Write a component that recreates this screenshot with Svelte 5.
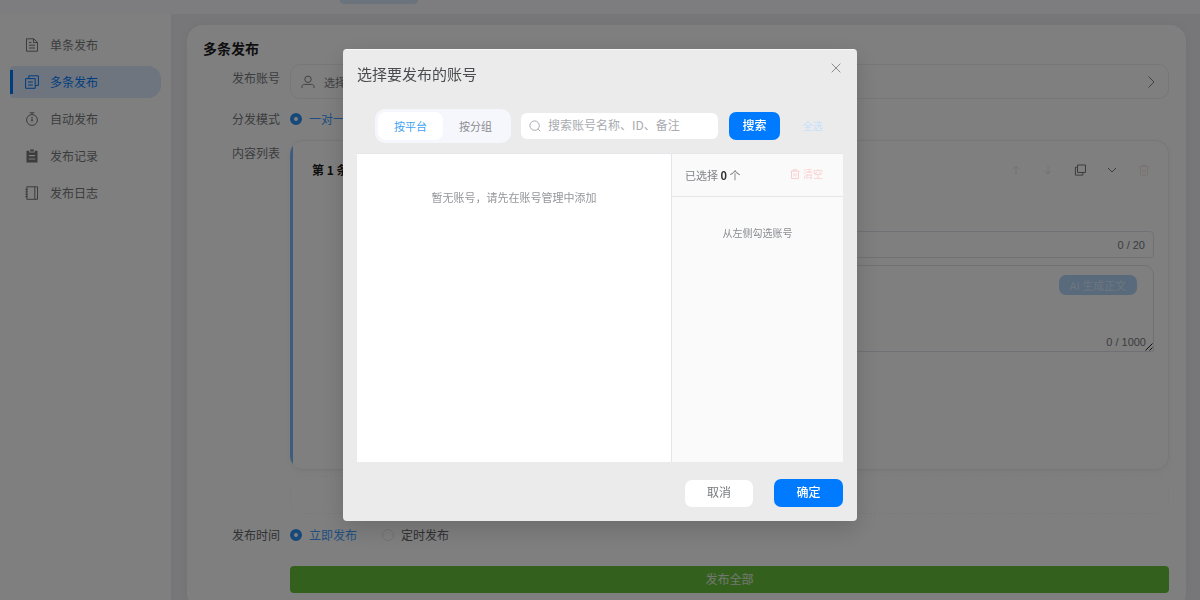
<script>
  const menu = [
    { label: '单条发布', icon: 'doc' },
    { label: '多条发布', icon: 'copy', active: true },
    { label: '自动发布', icon: 'timer' },
    { label: '发布记录', icon: 'clip' },
    { label: '发布日志', icon: 'book' },
  ];
  let when = $state('now');
  let mode = $state('one');
  let tab = $state('platform');
  let keyword = $state('');
  let title = $state('');
  let body = $state('');
</script>

<div class="app">
  <header class="topbar"><span class="pill"></span></header>
  <div class="shell">
    <nav class="side">
      {#each menu as m}
        <a href="#{m.icon}" class:active={m.active}>
          <svg class="ico" viewBox="0 0 14 14">
            {#if m.icon === 'doc'}
              <path d="M1.5 .8h7.2l3.8 3.6v8.8h-11zM8.5 .8v3.8h4M4 4.5h2.4M4 7.2h6M4 10h6" />
            {:else if m.icon === 'copy'}
              <path d="M.6 3.6h9.6v9.7H.6zM3.8 3.4V.8h9.6v9.6h-3M3 7h4.8M3 10h4.8" />
            {:else if m.icon === 'timer'}
              <circle cx="7" cy="8" r="5.4" /><path d="M4.7 .8h4.6M7 .8v1.8M7 4.8v3.4" /><circle cx="7" cy="8.6" r=".6" />
            {:else if m.icon === 'clip'}
              <path class="solid" fill-rule="evenodd" d="M1.5 1.8h2.8v1.6h5.4V1.8h2.8v11.8h-11zM3.8 6v1.2h6.4V6zM3.8 9.4v1.2h6.4V9.4zM5.2 .5h3.6v2H5.2z" />
            {:else}
              <path d="M1.8 .8h10.7v12.5H1.8zM9.8 .8v12.5M.4 3.4h2.4M.4 5.8h2.4M.4 8.2h2.4M.4 10.6h2.4" />
            {/if}
          </svg>
          {m.label}
        </a>
      {/each}
    </nav>

    <main>
      <section class="card">
        <h1>多条发布</h1>
        <div class="form">
          <span class="lab first">发布账号</span>
          <button class="picker">
            <svg class="user" viewBox="0 0 14 14"><circle cx="7" cy="4.3" r="3.2" /><path d="M1 13.2v-1.4c0-1.6 1-2.4 2.6-2.4h6.8c1.6 0 2.6.8 2.6 2.4v1.4" /></svg>
            <span>选择</span>
            <svg class="chev" viewBox="0 0 14 14"><path d="M4.5 1.5 10 7l-5.5 5.5" /></svg>
          </button>

          <span class="lab">分发模式</span>
          <div class="radios mode">
            <label class:on={mode === 'one'}><input type="radio" name="mode" value="one" bind:group={mode} />一对一</label>
          </div>

          <span class="lab list">内容列表</span>
          <div class="item">
            <div class="itemhead">
              <strong>第 1 条</strong>
              <button disabled aria-label="上移"><svg viewBox="0 0 14 14"><path d="M7 12V3M4 6l3-3 3 3" /></svg></button>
              <button disabled aria-label="下移"><svg viewBox="0 0 14 14"><path d="M7 3v8M4 8l3 3 3-3" /></svg></button>
              <button aria-label="复制"><svg viewBox="0 0 14 14"><path d="M4.5 2h8v7.500h-8zM4.500 4.200H2.400v7.900h7.500V9.600" /></svg></button>
              <button aria-label="收起"><svg viewBox="0 0 14 14"><path d="m3 5 4 4 4-4" /></svg></button>
              <button class="del" disabled aria-label="删除"><svg viewBox="0 0 14 14"><path d="M2 3.500h10M5 3.500V2h4v1.500M3.500 3.500V12h7V3.500M5.800 6v4M8.200 6v4" /></svg></button>
            </div>
            <div class="field one">
              <input type="text" aria-label="标题" bind:value={title} />
              <span class="count">{title.length} / 20</span>
            </div>
            <div class="field many">
              <textarea aria-label="正文" bind:value={body}></textarea>
              <button class="ai" disabled>AI 生成正文</button>
              <span class="count low">{body.length} / 1000</span>
              <svg class="grip" viewBox="0 0 8 8"><path d="M.5 7.500 7.500.5M4.500 7.500l3-3" /></svg>
            </div>
          </div>

          <div class="add"></div>

          <span class="lab time">发布时间</span>
          <div class="radios">
            <label class:on={when === 'now'}><input type="radio" name="when" value="now" bind:group={when} />立即发布</label>
            <label class:on={when === 'later'}><input type="radio" name="when" value="later" bind:group={when} />定时发布</label>
          </div>

          <button class="submit">发布全部</button>
        </div>
      </section>
    </main>
  </div>
</div>

<div class="mask">
  <div class="dialog" role="dialog" aria-modal="true" aria-labelledby="dlg-title">
    <div class="dhead">
      <h2 id="dlg-title">选择要发布的账号</h2>
      <button class="close" aria-label="关闭"><svg viewBox="0 0 10 10"><path d="m.7.7 8.600 8.600M9.300.7.7 9.300" /></svg></button>
    </div>
    <div class="tools">
      <div class="tabs">
        <button class:sel={tab === 'platform'} onclick={() => (tab = 'platform')}>按平台</button>
        <button class:sel={tab === 'group'} onclick={() => (tab = 'group')}>按分组</button>
      </div>
      <div class="search">
        <svg viewBox="0 0 12 12"><circle cx="5.600" cy="5.600" r="4.700" /><path d="m9 9 2.300 2.300" /></svg>
        <input type="text" aria-label="搜索账号" placeholder="搜索账号名称、ID、备注" bind:value={keyword} />
      </div>
      <button class="primary find">搜索</button>
      <button class="all" disabled>全选</button>
    </div>
    <div class="panes">
      <div class="left">暂无账号，请先在账号管理中添加</div>
      <div class="right">
        <div class="rhead">
          <span>已选择 <b>0</b> 个</span>
          <button class="clear" disabled>
            <svg viewBox="0 0 10 10"><path d="M.5 2.200h9M3.300 2.200V.7h3.400v1.500M1.500 2.200v7.300h7V2.200M3.900 4.300v3.200M6.100 4.300v3.200" /></svg>清空
          </button>
        </div>
        <p>从左侧勾选账号</p>
      </div>
    </div>
    <div class="foot">
      <button class="cancel">取消</button>
      <button class="primary ok">确定</button>
    </div>
  </div>
</div>

<style>
  :global(body) {
    margin: 0;
    overflow: hidden;
    background: #eeeef3;
  }
  .app,
  .mask {
    font: 12px/18px 'Noto Sans CJK SC', sans-serif;
    color: #77797d;
  }
  .app *,
  .mask * {
    box-sizing: border-box;
  }
  button,
  input,
  textarea {
    font: inherit;
    color: inherit;
    border: 0;
    padding: 0;
    margin: 0;
    background: none;
  }
  svg {
    fill: none;
    stroke: currentColor;
    display: block;
    flex: none;
  }
  .app {
    height: 100vh;
    display: flex;
    flex-direction: column;
    overflow: hidden;
  }
  .topbar {
    flex: none;
    height: 14px;
    background: #fafaff;
    padding-left: 340px;
  }
  .pill {
    display: block;
    width: 78px;
    height: 4px;
    border-radius: 0 0 12px 12px;
    background: #d6e6fa;
  }
  .shell {
    flex: 1;
    display: flex;
    min-height: 0;
  }
  .side {
    flex: none;
    width: 171px;
    padding: 15px 10px;
    background: #fff;
    display: flex;
    flex-direction: column;
    gap: 5px;
  }
  .side a {
    display: flex;
    align-items: center;
    gap: 11px;
    height: 32px;
    flex: none;
    padding-left: 15px;
    border-radius: 4px 13px 13px 4px;
    color: #77797d;
    text-decoration: none;
  }
  .side a.active {
    color: #007aff;
    background:
      linear-gradient(#007aff, #007aff) left center / 3px 24px no-repeat,
      #dceafc;
  }
  .ico {
    width: 14px;
    height: 14px;
  }
  .solid {
    fill: currentColor;
    stroke: none;
  }
  main {
    flex: 1;
    min-width: 0;
    padding: 11px 14px 0 16px;
  }
  .card {
    background: #fff;
    border-radius: 16px;
    min-height: 100%;
    padding: 15px 17px 16px 16px;
    box-shadow: 0 0 10px rgba(0, 0, 0, 0.04);
  }
  h1 {
    margin: 0 0 7px;
    font-size: 14px;
    line-height: 17px;
    color: #1d1d1f;
  }
  .form {
    display: grid;
    grid-template-columns: 77px 1fr;
    column-gap: 10px;
    align-items: start;
  }
  .lab {
    text-align: right;
    padding-top: 11px;
    white-space: nowrap;
  }
  .lab.first {
    padding-top: 5px;
  }
  .lab.list {
    padding-top: 4px;
  }
  .lab.time {
    padding-top: 12px;
    color: #606266;
  }
  .picker {
    height: 35px;
    display: flex;
    align-items: center;
    gap: 9px;
    padding: 0 10px 0 10px;
    border: 1px solid #eceff2;
    border-radius: 10px;
    font-size: 11px;
    color: #808388;
  }
  .picker span {
    flex: 1;
    text-align: left;
  }
  .user,
  .chev {
    width: 14px;
    height: 14px;
  }
  .radios {
    display: flex;
    gap: 25px;
    padding-top: 12px;
    color: #606266;
  }
  .mode {
    padding-top: 11px;
    padding-bottom: 12px;
  }
  .radios label {
    display: flex;
    align-items: center;
    gap: 7px;
  }
  .radios .on {
    color: #409eff;
  }
  input[type='radio'] {
    appearance: none;
    width: 12px;
    height: 12px;
    border-radius: 50%;
    border: 1px solid #e4e6ea;
    background: #fff;
  }
  input[type='radio']:checked {
    border: 4px solid #2d90f5;
  }
  .item {
    height: 330px;
    border: 1px solid #ebeef2;
    border-left: 0;
    border-radius: 14px;
    padding: 18px 14px 18px 22px;
    background: linear-gradient(#7db8fb, #7db8fb) left center / 3px 318px no-repeat;
    box-shadow: 0 2px 8px rgba(0, 0, 0, 0.05);
  }
  .itemhead {
    display: flex;
    align-items: center;
    gap: 18px;
    height: 22px;
    margin-bottom: 50px;
    padding-right: 3px;
  }
  .itemhead strong {
    flex: 1;
    color: #1d1d1f;
  }
  .itemhead svg {
    width: 14px;
    height: 14px;
  }
  .itemhead button:disabled {
    color: #e2e4e8;
  }
  .itemhead .del:disabled {
    color: #f7e4e4;
  }
  .field {
    position: relative;
    margin-left: 70px;
    border: 1px solid #e0e3e8;
    font-size: 11px;
    color: #77797d;
  }
  .count {
    font-family: 'Liberation Sans', sans-serif;
  }
  .one {
    display: flex;
    align-items: center;
    height: 27px;
    border-radius: 4px;
    padding: 0 8px;
    margin-bottom: 7px;
  }
  .one input {
    flex: 1;
    min-width: 0;
  }
  .many {
    height: 87px;
    border-radius: 10px 10px 2px 10px;
  }
  textarea {
    display: block;
    width: 100%;
    height: 100%;
    resize: none;
    padding: 8px;
  }
  .ai {
    position: absolute;
    top: 9px;
    right: 16px;
    width: 78px;
    height: 20px;
    border-radius: 7px;
    background: #b0d4f8;
    color: #dcecfc;
    line-height: 18px;
  }
  .low {
    position: absolute;
    right: 7px;
    bottom: 0;
  }
  .grip {
    position: absolute;
    right: 0;
    bottom: 0;
    width: 8px;
    height: 8px;
    color: #222;
  }
  .add {
    grid-column: 2;
    height: 38px;
    margin-top: 6px;
    border: 1px dashed #f6f7f9;
    border-radius: 10px;
  }
  .submit {
    grid-column: 2;
    height: 27px;
    margin-top: 22px;
    padding-bottom: 2px;
    border-radius: 4px;
    background: #67c23a;
    color: #e6f0e2;
  }
  .mask {
    position: fixed;
    inset: 0;
    background: rgba(0, 0, 0, 0.5);
    display: flex;
    justify-content: center;
    align-items: flex-start;
    padding-top: 49px;
  }
  .dialog {
    width: 90%;
    max-width: 514px;
    padding: 13px 14px 14px;
    background: #ebebeb;
    border-radius: 4px;
    border-top: 1px solid #f7f7f7;
    box-shadow: 0 8px 24px rgba(0, 0, 0, 0.16);
  }
  .dhead {
    display: flex;
    justify-content: space-between;
    height: 46px;
  }
  h2 {
    margin: 0;
    font-size: 15px;
    line-height: 22px;
    font-weight: 400;
    color: #4a4c50;
  }
  .close {
    width: 14px;
    height: 10px;
    color: #8a8c90;
    display: flex;
    justify-content: center;
  }
  .close svg {
    width: 10px;
    height: 10px;
  }
  .tools {
    display: flex;
    align-items: center;
    padding: 0 20px 0 18px;
    margin-bottom: 10px;
  }
  .tabs {
    display: flex;
    padding: 3px;
    height: 34px;
    border-radius: 10px;
    background: #f5f7fc;
    font-size: 11px;
    color: #8a8c90;
  }
  .tabs button {
    width: 65px;
    border-radius: 8px;
  }
  .tabs .sel {
    background: #fff;
    color: #3fa2f2;
  }
  .search {
    flex: 1;
    min-width: 0;
    display: flex;
    align-items: center;
    gap: 7px;
    height: 26px;
    margin: 0 11px 0 10px;
    padding: 0 8px 2px;
    border-radius: 6px;
    background: #fff;
    color: #a8abb0;
  }
  .search svg {
    width: 12px;
    height: 12px;
    margin-top: 2px;
  }
  .search input {
    flex: 1;
    min-width: 0;
    outline: 0;
  }
  .search input::placeholder {
    color: #a8abb0;
    opacity: 1;
  }
  .primary {
    background: #007aff;
    color: #fff;
    font-weight: 500;
    border-radius: 7px;
    padding-bottom: 2px;
  }
  .find {
    width: 51px;
    height: 28px;
  }
  .all {
    margin-left: 23px;
    font-size: 10px;
    color: #c3dffb;
  }
  .panes {
    display: flex;
    height: 309px;
    border-top: 1px solid #e4e6ea;
    background: #fff;
  }
  .left {
    flex: 1;
    padding-top: 34px;
    text-align: center;
    font-size: 11px;
    color: #94969a;
  }
  .right {
    width: 172px;
    border-left: 1px solid #e4e6ea;
    background: #fafafa;
    font-size: 10px;
  }
  .rhead {
    display: flex;
    justify-content: space-between;
    align-items: center;
    height: 43px;
    padding: 0 20px 0 13px;
    border-bottom: 1px solid #e4e6ea;
    font-size: 11px;
    color: #808287;
  }
  .rhead b {
    color: #303133;
  }
  .clear {
    display: flex;
    align-items: center;
    gap: 3px;
    padding-bottom: 2px;
    font-size: 10px;
    color: #fbcfcf;
  }
  .clear svg {
    width: 10px;
    height: 10px;
  }
  .right p {
    margin: 27px 0 0;
    text-align: center;
    color: #8a8c90;
  }
  .foot {
    display: flex;
    justify-content: flex-end;
    align-items: center;
    gap: 21px;
    padding-top: 17px;
  }
  .cancel {
    width: 68px;
    height: 27px;
    padding-bottom: 2px;
    border-radius: 7px;
    background: #fff;
  }
  .ok {
    width: 69px;
    height: 28px;
  }
</style>
